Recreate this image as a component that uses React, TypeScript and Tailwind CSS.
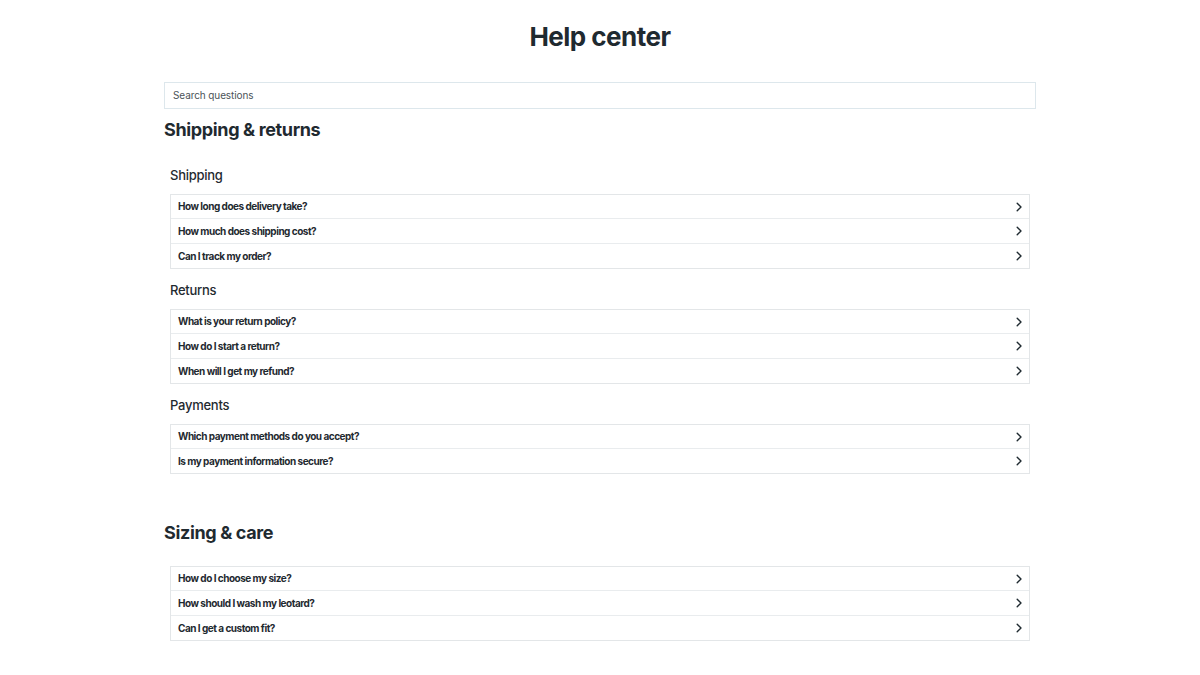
import React from 'react';

type Group = { title?: string; questions: string[] };
type Section = { title: string; groups: Group[] };

const sections: Section[] = [
  {
    title: 'Shipping & returns',
    groups: [
      {
        title: 'Shipping',
        questions: ['How long does delivery take?', 'How much does shipping cost?', 'Can I track my order?'],
      },
      {
        title: 'Returns',
        questions: ['What is your return policy?', 'How do I start a return?', 'When will I get my refund?'],
      },
      {
        title: 'Payments',
        questions: ['Which payment methods do you accept?', 'Is my payment information secure?'],
      },
    ],
  },
  {
    title: 'Sizing & care',
    groups: [
      {
        questions: ['How do I choose my size?', 'How should I wash my leotard?', 'Can I get a custom fit?'],
      },
    ],
  },
];

const Chevron = () => (
  <svg width="8" height="10" viewBox="0 0 8 10" fill="none" className="shrink-0">
    <path d="M2.2 1.2 L6 5 L2.2 8.8" stroke="#1f2a30" strokeWidth="1.4" strokeLinecap="round" strokeLinejoin="round" />
  </svg>
);

const App: React.FC = () => {
  return (
    <div className="min-h-screen bg-white text-[#1f2a30]" style={{ fontFamily: 'Inter, "Noto Sans", sans-serif' }}>
      <div className="mx-auto w-[872px] pt-[19px] pb-10">
        <h1 className="text-center text-[26px] leading-[36px] font-bold tracking-[-0.02em]">Help center</h1>

        {/* Search */}
        <div className="mt-[27px] h-[27px] border border-[#dde7ec] flex items-center px-2">
          <span className="text-[10px] tracking-[-0.01em] text-[#4b5358]">Search questions</span>
        </div>

        {sections.map((section, si) => (
          <div key={section.title} className={si === 0 ? 'mt-[9px]' : 'mt-[47px]'}>
            <h2 className="text-[18px] leading-[24px] font-bold tracking-[-0.02em]">{section.title}</h2>
            <div className="px-[6px]">
              {section.groups.map((group, gi) => (
                <div key={gi} className={group.title ? (gi === 0 ? 'mt-[23px]' : 'mt-[11px]') : 'mt-[21px]'}>
                  {group.title && (
                    <h3 className="text-[13px] leading-[20px] font-medium tracking-[-0.02em] mb-[9px]">{group.title}</h3>
                  )}
                  <div className="border border-[#e3e6e8]">
                    {group.questions.map((q, qi) => (
                      <div
                        key={q}
                        className={`flex items-center justify-between pl-[7px] pr-[6px] ${qi > 0 ? 'h-[25px] border-t border-[#e9ecee]' : 'h-[23px]'}`}
                      >
                        <span className="text-[10px] font-bold tracking-[-0.05em]">{q}</span>
                        <Chevron />
                      </div>
                    ))}
                  </div>
                </div>
              ))}
            </div>
          </div>
        ))}
      </div>
    </div>
  );
};

export default App;
